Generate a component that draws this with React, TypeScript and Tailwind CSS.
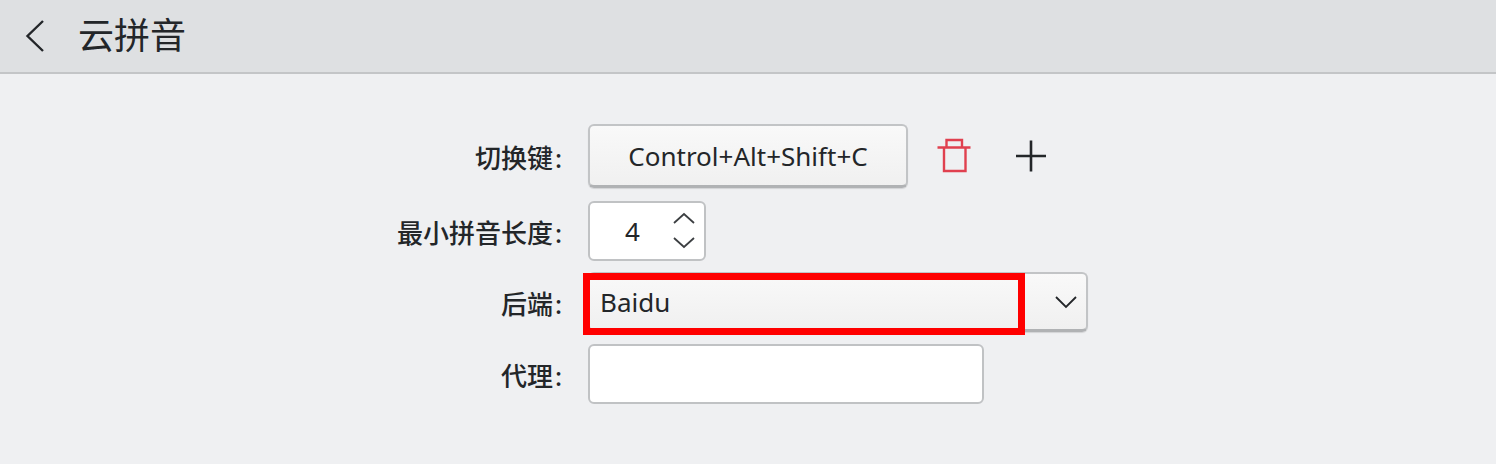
function Colon() {
  return <span className="ml-[2px]">:</span>;
}

export default function App() {
  const label = "w-[562px] text-right text-[26px] leading-none text-[#232629] font-medium pt-[3px]";
  const raised = "rounded-[6px] border-2 border-[#c2c4c6] border-b-[3px] border-b-[#b0b2b4] bg-gradient-to-b from-[#f9f9f9] to-[#f0f0f0] shadow-[0_1px_1px_rgba(0,0,0,0.12)]";
  return (
    <div className="w-[1496px] h-[464px] overflow-hidden bg-[#eff0f2] font-['Noto_Sans','Noto_Sans_CJK_SC',sans-serif] text-[#232629]">
      <header className="h-[74px] bg-[#dee0e2] border-b-2 border-[#c3c5c7] flex items-center">
        <svg className="ml-[25px] w-[20px] h-[34px]" viewBox="0 0 20 34" fill="none" stroke="#232629" strokeWidth="2.4">
          <path d="M18 2 L2.5 17 L18 32" />
        </svg>
        <h1 className="ml-[33px] text-[36px] font-normal leading-none">云拼音</h1>
      </header>
      <main className="pt-[50px] flex flex-col">
        <div className="flex items-center h-[64px]">
          <span className={label}>切换键<Colon /></span>
          <button className={`ml-[26px] w-[320px] h-[64px] text-[26px] leading-none ${raised}`}>Control+Alt+Shift+C</button>
          <svg className="ml-[29px] w-[34px] h-[36px]" viewBox="0 0 34 36" fill="none" stroke="#e0404f" strokeWidth="2.4">
            <path d="M0.5 9.5 H33.5 M9.5 9.5 V2 H25 V9.5 M7 9.5 V33 H28.5 V9.5" />
          </svg>
          <svg className="ml-[44px] w-[32px] h-[32px]" viewBox="0 0 32 32" fill="none" stroke="#232629" strokeWidth="2.6">
            <path d="M16 0.5 V31.5 M1 16 H31" />
          </svg>
        </div>
        <div className="flex items-center h-[60px] mt-[13px]">
          <span className={label}>最小拼音长度<Colon /></span>
          <div className="ml-[26px] w-[118px] h-[60px] rounded-[6px] border-2 border-[#c0c2c4] bg-white flex items-center">
            <span className="ml-[35px] text-[26px] leading-none">4</span>
            <svg className="ml-[33px] w-[22px] h-[38px]" viewBox="0 0 22 38" fill="none" stroke="#3c3f42" strokeWidth="1.8">
              <path d="M1 11 L11 2 L21 11 M1 26 L11 35 L21 26" />
            </svg>
          </div>
        </div>
        <div className="flex items-center h-[60px] mt-[11px]">
          <span className={label}>后端<Colon /></span>
          <div className={`ml-[26px] relative w-[500px] h-[60px] flex items-center justify-between ${raised}`}>
            <span className="ml-[10px] text-[26px] leading-none">Baidu</span>
            <svg className="mr-[9px] w-[22px] h-[14px]" viewBox="0 0 22 14" fill="none" stroke="#232629" strokeWidth="1.8">
              <path d="M1 2 L11 12 L21 2" />
            </svg>
            <div className="absolute left-[-7px] top-[-1px] w-[442px] h-[62px] border-[7px] border-[#ff0000]" />
          </div>
        </div>
        <div className="flex items-center h-[60px] mt-[12px]">
          <span className={label}>代理<Colon /></span>
          <div className="ml-[26px] w-[396px] h-[60px] rounded-[6px] border-2 border-[#c0c2c4] bg-white" />
        </div>
      </main>
    </div>
  );
}
